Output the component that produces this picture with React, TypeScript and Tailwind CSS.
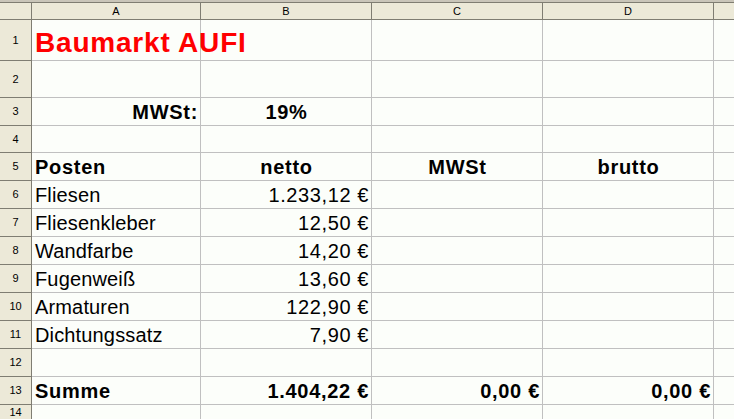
const cols = ['A', 'B', 'C', 'D', '']

type Cell = { text?: string; align?: 'left' | 'right' | 'center'; bold?: boolean; red?: boolean; big?: boolean }

const rows: { h: string; cells: Cell[] }[] = [
  { h: 'h-[41px]', cells: [{ text: 'Baumarkt AUFI', bold: true, red: true, big: true }] },
  { h: 'h-[37px]', cells: [] },
  { h: 'h-[28px]', cells: [{ text: 'MWSt:', align: 'right', bold: true }, { text: '19%', align: 'center', bold: true }] },
  { h: 'h-[27px]', cells: [] },
  {
    h: 'h-[28px]',
    cells: [
      { text: 'Posten', bold: true },
      { text: 'netto', align: 'center', bold: true },
      { text: 'MWSt', align: 'center', bold: true },
      { text: 'brutto', align: 'center', bold: true },
    ],
  },
  { h: 'h-[28px]', cells: [{ text: 'Fliesen' }, { text: '1.233,12 €', align: 'right' }] },
  { h: 'h-[28px]', cells: [{ text: 'Fliesenkleber' }, { text: '12,50 €', align: 'right' }] },
  { h: 'h-[28px]', cells: [{ text: 'Wandfarbe' }, { text: '14,20 €', align: 'right' }] },
  { h: 'h-[28px]', cells: [{ text: 'Fugenweiß' }, { text: '13,60 €', align: 'right' }] },
  { h: 'h-[28px]', cells: [{ text: 'Armaturen' }, { text: '122,90 €', align: 'right' }] },
  { h: 'h-[28px]', cells: [{ text: 'Dichtungssatz' }, { text: '7,90 €', align: 'right' }] },
  { h: 'h-[28px]', cells: [] },
  {
    h: 'h-[28px]',
    cells: [
      { text: 'Summe', bold: true },
      { text: '1.404,22 €', align: 'right', bold: true },
      { text: '0,00 €', align: 'right', bold: true },
      { text: '0,00 €', align: 'right', bold: true },
    ],
  },
  { h: 'h-[15px]', cells: [] },
]

const gridCols = 'grid grid-cols-[32px_169px_171px_171px_171px_1fr]'

function textClass(cell: Cell) {
  if (cell.big) return 'text-[28px] leading-[32px] font-bold tracking-[0.8px] text-[#ff0000]'
  const isNum = /^\d/.test(cell.text ?? '')
  const size = 'text-[20px] leading-[23px]'
  if (cell.bold) return `${size} font-bold tracking-[0.7px]`
  return `${size} ${isNum ? 'tracking-[0.6px]' : 'tracking-[0.15px]'}`
}

export default function App() {
  return (
    <div className="h-[419px] w-[734px] overflow-hidden bg-[#fcfefa] font-['Liberation_Sans',Arial,sans-serif] text-black">
      <div className="h-[2px] bg-[#c9c5b9]" />
      {/* column headers */}
      <div className={`${gridCols} h-[18px] border-y border-[#7f7d72] bg-[#ece9d8]`}>
        <div className="border-r border-[#7f7d72]" />
        {cols.map((c, i) => (
          <div
            key={i}
            className={`flex items-center justify-center text-[11px] leading-none ${i < 4 ? 'border-r border-[#7f7d72]' : ''}`}
          >
            {c}
          </div>
        ))}
      </div>

      {rows.map((row, r) => (
        <div key={r} className={`${gridCols} ${row.h} overflow-hidden`}>
          <div className="flex items-center justify-center border-r border-b border-[#7f7d72] bg-[#ece9d8] text-[11px] leading-none">
            {r + 1}
          </div>
          {[0, 1, 2, 3, 4].map((c) => {
            const cell = row.cells[c]
            const align =
              cell?.align === 'right' ? 'justify-end' : cell?.align === 'center' ? 'justify-center' : 'justify-start'
            return (
              <div
                key={c}
                className={`flex min-h-0 items-end whitespace-nowrap border-b border-[#c0c0c0] pb-[1px] pl-[3px] pr-[2px] ${align} ${
                  c < 4 ? 'border-r' : ''
                }`}
              >
                {cell?.text && <span className={textClass(cell)}>{cell.text}</span>}
              </div>
            )
          })}
        </div>
      ))}
    </div>
  )
}
